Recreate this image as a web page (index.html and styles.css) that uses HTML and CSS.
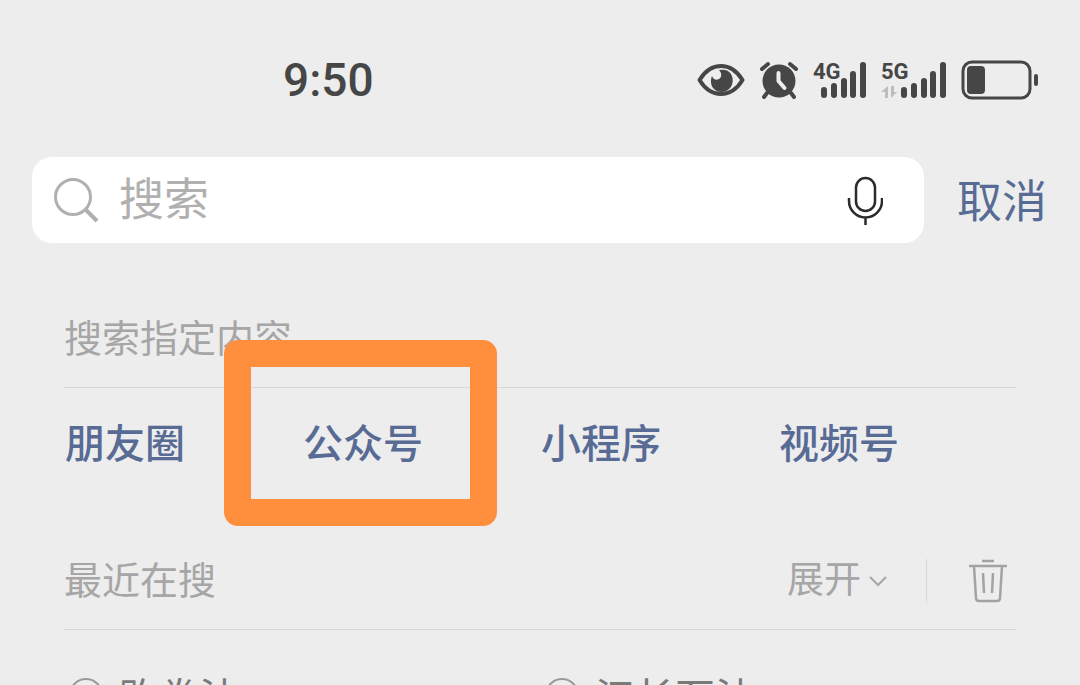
FILE: index.html
```html
<!DOCTYPE html>
<html lang="zh-CN">
<head>
  <meta charset="UTF-8">
  <meta name="viewport" content="width=device-width, initial-scale=1.0">
  <title>搜索</title>
  <link rel="stylesheet" href="styles.css">
</head>
<body>
  <header class="status-bar">
    <time class="clock">9:50</time>
    <div class="status-icons">
      <svg class="eye" width="48" height="40" viewBox="0 0 48 40">
        <path d="M2.500 20C8 11 15 6 24 6s16 5 21.500 14C40 29 33 34 24 34S8 29 2.500 20z" fill="none" stroke="#464646" stroke-width="4" stroke-linejoin="round"/>
        <path d="M22 10c5-1 10 0 12 4 3 5 2 12-2 15-4 4-11 4-15 0-3-3-4-8-2-13 1 3 4 5 7 3 3-2 3-6 0-9z" fill="#464646"/>
      </svg>
      <svg class="alarm" width="40" height="40" viewBox="0 0 40 40">
        <circle cx="20" cy="21" r="16.500" fill="#464646"/>
        <path d="M3 9l6-5M31 4l6 5M8 33l-3 4M32 33l3 4" stroke="#464646" stroke-width="4" stroke-linecap="round"/>
        <path d="M19.500 13v8l6 7" fill="none" stroke="#ededed" stroke-width="4" stroke-linecap="round" stroke-linejoin="round"/>
      </svg>
      <svg class="signal" width="54" height="40" viewBox="0 0 54 40">
        <text x="0" y="19">4G</text>
        <path d="M11 30v5M21 26v9M31 21v14M40 14v21M50 5v30" stroke="#464646" stroke-width="6" stroke-linecap="round"/>
      </svg>
      <svg class="signal" width="66" height="40" viewBox="0 0 66 40">
        <text x="0" y="19">5G</text>
        <path d="M7 26v12H4v-6H0zM10 26v12l6-6h-3v-6z" fill="#bdbdbd"/>
        <path d="M23 30v5M33 26v9M43 21v14M52 14v21M62 5v30" stroke="#464646" stroke-width="6" stroke-linecap="round"/>
      </svg>
      <svg class="battery" width="78" height="40" viewBox="0 0 78 40">
        <rect x="2" y="2" width="67" height="36" rx="9" fill="none" stroke="#464646" stroke-width="3"/>
        <rect x="6" y="6" width="18" height="28" rx="4" fill="#464646"/>
        <rect x="73" y="14" width="4" height="12" rx="2" fill="#464646"/>
      </svg>
    </div>
  </header>

  <form class="search-bar">
    <div class="search-box">
      <svg width="46" height="46" viewBox="0 0 46 46" fill="none" stroke="#b0b0b0" stroke-width="3">
        <circle cx="20" cy="20" r="17.500"/>
        <path d="M32 32l12 12" stroke-width="4"/>
      </svg>
      <input type="search" class="search-input" placeholder="搜索" aria-label="搜索">
      <button type="button" class="icon-button" aria-label="语音输入">
        <svg width="36" height="50" viewBox="0 0 36 50" fill="none" stroke="#2b2b2b" stroke-width="2.500">
          <rect x="9" y="3" width="19" height="33" rx="9.500"/>
          <path d="M2 23v3a16.500 16.500 0 0 0 33 0v-3M18.500 42v8"/>
        </svg>
      </button>
    </div>
    <button type="button" class="cancel">取消</button>
  </form>

  <main class="content">
    <section>
      <div class="section-head">
        <h2>搜索指定内容</h2>
      </div>
      <nav class="types">
        <a href="#">朋友圈</a>
        <a href="#" class="marked">公众号</a>
        <a href="#">小程序</a>
        <a href="#">视频号</a>
      </nav>
    </section>

    <section>
      <div class="section-head">
        <h2>最近在搜</h2>
        <div class="actions">
          <button type="button" class="expand">展开
            <svg width="18" height="12" viewBox="0 0 18 12" fill="none" stroke="#a6a6a6" stroke-width="2"><path d="M1 2l8 8 8-8"/></svg>
          </button>
          <button type="button" class="icon-button trash" aria-label="清空">
            <svg width="38" height="44" viewBox="0 0 38 44" fill="none" stroke="#a3a3a3" stroke-width="2.500">
              <path d="M13 2h12M0 7h38M5 7l2 32q0 3 3 3h18q3 0 3-3l2-32M14 14l1 20M24 14l-1 20"/>
            </svg>
          </button>
        </div>
      </div>
      <ul class="history">
        <li>
          <svg width="34" height="34" viewBox="0 0 34 34" fill="none" stroke="#999" stroke-width="2"><circle cx="17" cy="17" r="16"/><path d="M17 8v10l7 4"/></svg>
          <a href="#">购券法</a>
        </li>
        <li>
          <svg width="34" height="34" viewBox="0 0 34 34" fill="none" stroke="#999" stroke-width="2"><circle cx="17" cy="17" r="16"/><path d="M17 8v10l7 4"/></svg>
          <a href="#">江长石法</a>
        </li>
      </ul>
    </section>
  </main>
</body>
</html>
```
FILE: styles.css
```css
* {
  box-sizing: border-box;
}

body {
  margin: 0;
  height: 100vh;
  overflow: hidden;
  background-color: #ededed;
  font-family: "Noto Sans CJK SC", sans-serif;
}

button {
  padding: 0;
  border: none;
  background: none;
  font-family: inherit;
  cursor: pointer;
}

a {
  text-decoration: none;
}

svg {
  display: block;
  flex: none;
}

.status-bar {
  display: flex;
  justify-content: space-between;
  align-items: center;
  height: 157px;
  padding: 3px 41px 0 283px;
}

.clock {
  color: #464646;
  font-family: Roboto, sans-serif;
  font-size: 46px;
  font-weight: 500;
}

.status-icons {
  display: flex;
  align-items: center;
  gap: 14px;
}

.signal {
  overflow: visible;
}

.signal text {
  fill: #464646;
  font-family: Roboto, sans-serif;
  font-size: 22px;
  font-weight: bold;
}

.search-bar {
  display: flex;
  align-items: center;
  padding: 0 33px 0 32px;
}

.search-box {
  display: flex;
  flex: 1;
  align-items: center;
  height: 86px;
  padding: 0 41px 0 21px;
  border-radius: 20px;
  background-color: #fff;
}

.search-input {
  flex: 1;
  min-width: 0;
  padding: 0 0 8px;
  margin-left: 20px;
  border: none;
  outline: none;
  background: none;
  font-family: inherit;
  font-size: 45px;
}

.search-input::placeholder {
  color: #b0b0b0;
}

.cancel {
  margin-left: 33px;
  padding-bottom: 4px;
  color: #576b95;
  font-size: 45px;
}

.content {
  padding: 56px 64px 0;
}

.section-head {
  display: flex;
  justify-content: space-between;
  align-items: center;
  height: 89px;
  border-bottom: 1px solid #d8d8d8;
  color: #a6a6a6;
}

.section-head h2 {
  margin: 0;
  padding-bottom: 16px;
  font-size: 38px;
  font-weight: normal;
}

.types {
  display: grid;
  grid-template-columns: repeat(4, 1fr);
  align-items: center;
  height: 106px;
  margin-bottom: 47px;
}

.types a {
  position: relative;
  padding-left: 1px;
  color: #576b95;
  font-size: 40px;
  font-weight: 500;
}

/* highlight frame around the marked entry */
.marked::after {
  content: "";
  position: absolute;
  top: -72px;
  left: -78px;
  box-sizing: border-box;
  width: 273px;
  height: 186px;
  border: 27px solid #ff8f3c;
  border-radius: 14px;
}

.actions {
  display: flex;
  align-items: center;
  padding-bottom: 8px;
}

.expand {
  display: flex;
  align-items: center;
  gap: 8px;
  padding: 0 39px 8px 0;
  color: #a6a6a6;
  font-size: 37px;
}

.expand svg {
  margin-top: 8px;
}

.trash {
  padding: 0 9px 0 42px;
  border-left: 1px solid #d8d8d8;
}

.history {
  display: grid;
  grid-template-columns: repeat(2, 1fr);
  margin: 0;
  padding: 36px 0 0;
  list-style: none;
}

.history li {
  display: flex;
  align-items: center;
  gap: 16px;
  padding-left: 5px;
}

.history a {
  color: #7a7a7a;
  font-size: 40px;
}
```
